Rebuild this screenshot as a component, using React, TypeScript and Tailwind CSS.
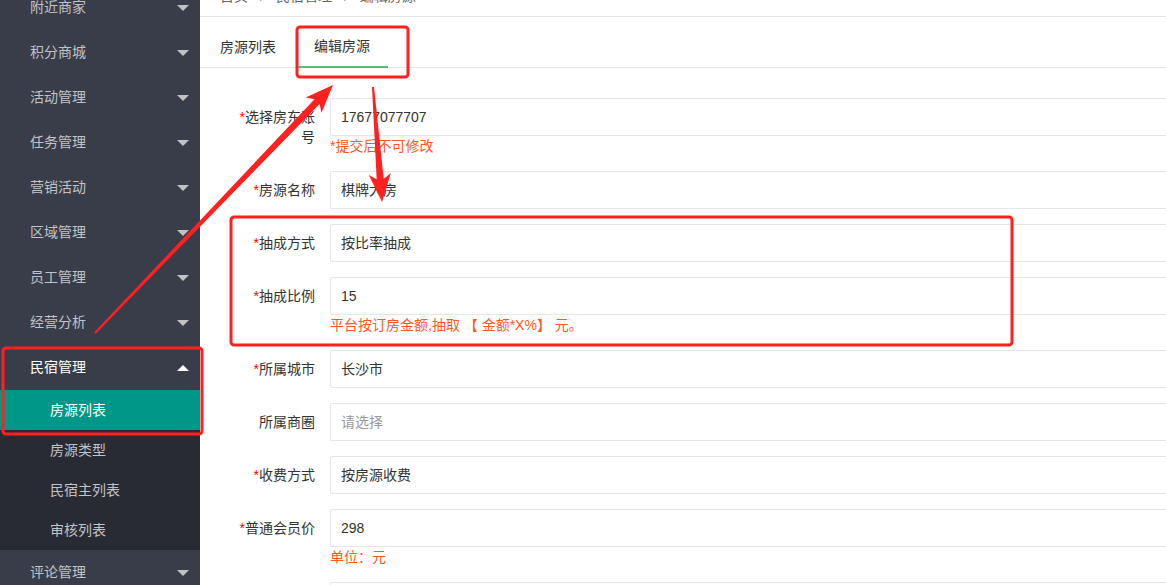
const menu = [
  '附近商家',
  '积分商城',
  '活动管理',
  '任务管理',
  '营销活动',
  '区域管理',
  '员工管理',
  '经营分析',
]

const subMenu = ['房源列表', '房源类型', '民宿主列表', '审核列表']

type Row = {
  label: string
  required?: boolean
  value?: string
  placeholder?: string
  hint?: string
}

const rows: Row[] = [
  { label: '选择房东账号', required: true, value: '17677077707', hint: '*提交后不可修改' },
  { label: '房源名称', required: true, value: '棋牌大房' },
  { label: '抽成方式', required: true, value: '按比率抽成' },
  { label: '抽成比例', required: true, value: '15', hint: '平台按订房金额,抽取 【 金额*X%】 元。' },
  { label: '所属城市', required: true, value: '长沙市' },
  { label: '所属商圈', placeholder: '请选择' },
  { label: '收费方式', required: true, value: '按房源收费' },
  { label: '普通会员价', required: true, value: '298', hint: '单位：元' },
  { label: '会员价', required: true, value: '' },
]

function Caret({ up }: { up?: boolean }) {
  if (up) {
    return <span className="w-0 h-0 border-x-[6px] border-x-transparent border-b-[6px] border-b-white" />
  }
  return <span className="w-0 h-0 border-x-[6px] border-x-transparent border-t-[6px] border-t-[#c2c2c2]" />
}

function Sidebar() {
  return (
    <div className="w-[200px] shrink-0 bg-[#393d49] text-[14px]">
      <div className="-mt-[15px]">
        {menu.map((m) => (
          <div key={m} className="h-[45px] flex items-center justify-between pl-[30px] pr-[11px] text-[#c2c3c6]">
            <span>{m}</span>
            <Caret />
          </div>
        ))}
        <div className="h-[45px] flex items-center justify-between pl-[30px] pr-[11px] text-white">
          <span>民宿管理</span>
          <Caret up />
        </div>
        <div className="bg-[#282b33]">
          {subMenu.map((s, i) => (
            <div
              key={s}
              className={
                i === 0
                  ? 'h-[40px] flex items-center pl-[50px] bg-[#009688] text-white'
                  : 'h-[40px] flex items-center pl-[50px] text-[#c2c3c6]'
              }
            >
              {s}
            </div>
          ))}
        </div>
        <div className="h-[45px] flex items-center justify-between pl-[30px] pr-[11px] text-[#c2c3c6]">
          <span>评论管理</span>
          <Caret />
        </div>
      </div>
    </div>
  )
}

function FormRow({ row }: { row: Row }) {
  return (
    <div className="flex mb-[15px]">
      <label className="w-[110px] shrink-0 px-[15px] py-[9px] text-right leading-[20px] text-[#333]">
        {row.required && <span className="text-[#ff0000]">*</span>}
        {row.label}
      </label>
      <div className="w-[900px] shrink-0">
        <div className="h-[38px] border border-[#e6e6e6] rounded-[2px] pl-[10px] flex items-center">
          {row.value ? (
            <span className="text-[#333]">{row.value}</span>
          ) : (
            <span className="text-[#999]">{row.placeholder}</span>
          )}
        </div>
        {row.hint && <div className="leading-[20px] text-[#ff5722]">{row.hint}</div>}
      </div>
    </div>
  )
}

type Pt = [number, number]

// snipaste-style arrow: thin tail, widening shaft, solid head
function arrowPoints(t: Pt, h: Pt) {
  const dx = h[0] - t[0]
  const dy = h[1] - t[1]
  const len = Math.hypot(dx, dy)
  const ux = dx / len
  const uy = dy / len
  const nx = -uy
  const ny = ux
  const headLen = 28
  const headW = 11
  const shaftW = 3.5
  const bx = h[0] - ux * headLen
  const by = h[1] - uy * headLen
  const p = (x: number, y: number) => `${x.toFixed(1)},${y.toFixed(1)}`
  return [
    p(t[0] + nx * 1, t[1] + ny * 1),
    p(bx + ux * 5 + nx * shaftW, by + uy * 5 + ny * shaftW),
    p(bx + nx * headW, by + ny * headW),
    p(h[0], h[1]),
    p(bx - nx * headW, by - ny * headW),
    p(bx + ux * 5 - nx * shaftW, by + uy * 5 - ny * shaftW),
    p(t[0] - nx * 1, t[1] - ny * 1),
  ].join(' ')
}

function Annotations() {
  return (
    <svg className="absolute inset-0 pointer-events-none" width="1166" height="585">
      <rect x="297" y="27" width="111" height="50" rx="3" fill="none" stroke="#ff2020" strokeWidth="3" />
      <rect x="231" y="217" width="781" height="128" rx="3" fill="none" stroke="#ff2020" strokeWidth="3" />
      <rect x="3" y="348" width="199" height="86" rx="3" fill="none" stroke="#ff2020" strokeWidth="3" />
      <polygon points={arrowPoints([95, 333], [333, 85])} fill="#ff2020" />
      <polygon points={arrowPoints([373, 87], [382, 202])} fill="#ff2020" />
    </svg>
  )
}

export default function App() {
  return (
    <div
      className="relative w-[1166px] h-[585px] overflow-hidden flex bg-white text-[14px]"
      style={{ fontFamily: '"Liberation Sans", "Noto Sans CJK SC", sans-serif' }}
    >
      <Sidebar />
      <div className="flex-1 overflow-hidden">
        <div className="-mt-[24px] h-[41px] border-b border-[#e6e6e6] flex items-center pl-[20px] text-[#666] gap-[12px]">
          <span>首页</span>
          <span className="text-[#999]">/</span>
          <span>民宿管理</span>
          <span className="text-[#999]">/</span>
          <span>编辑房源</span>
        </div>
        <div className="mt-[10px] h-[41px] border-b border-[#e6e6e6] flex pl-[20px] text-[#333]">
          <div className="h-[40px] flex items-center">房源列表</div>
          <div className="ml-[20px] w-[92px] h-[41px] flex items-center justify-center border-b-2 border-[#5fb878]">
            编辑房源
          </div>
        </div>
        <div className="pt-[30px] pl-[20px]">
          {rows.map((r) => (
            <FormRow key={r.label} row={r} />
          ))}
        </div>
      </div>
      <Annotations />
    </div>
  )
}
